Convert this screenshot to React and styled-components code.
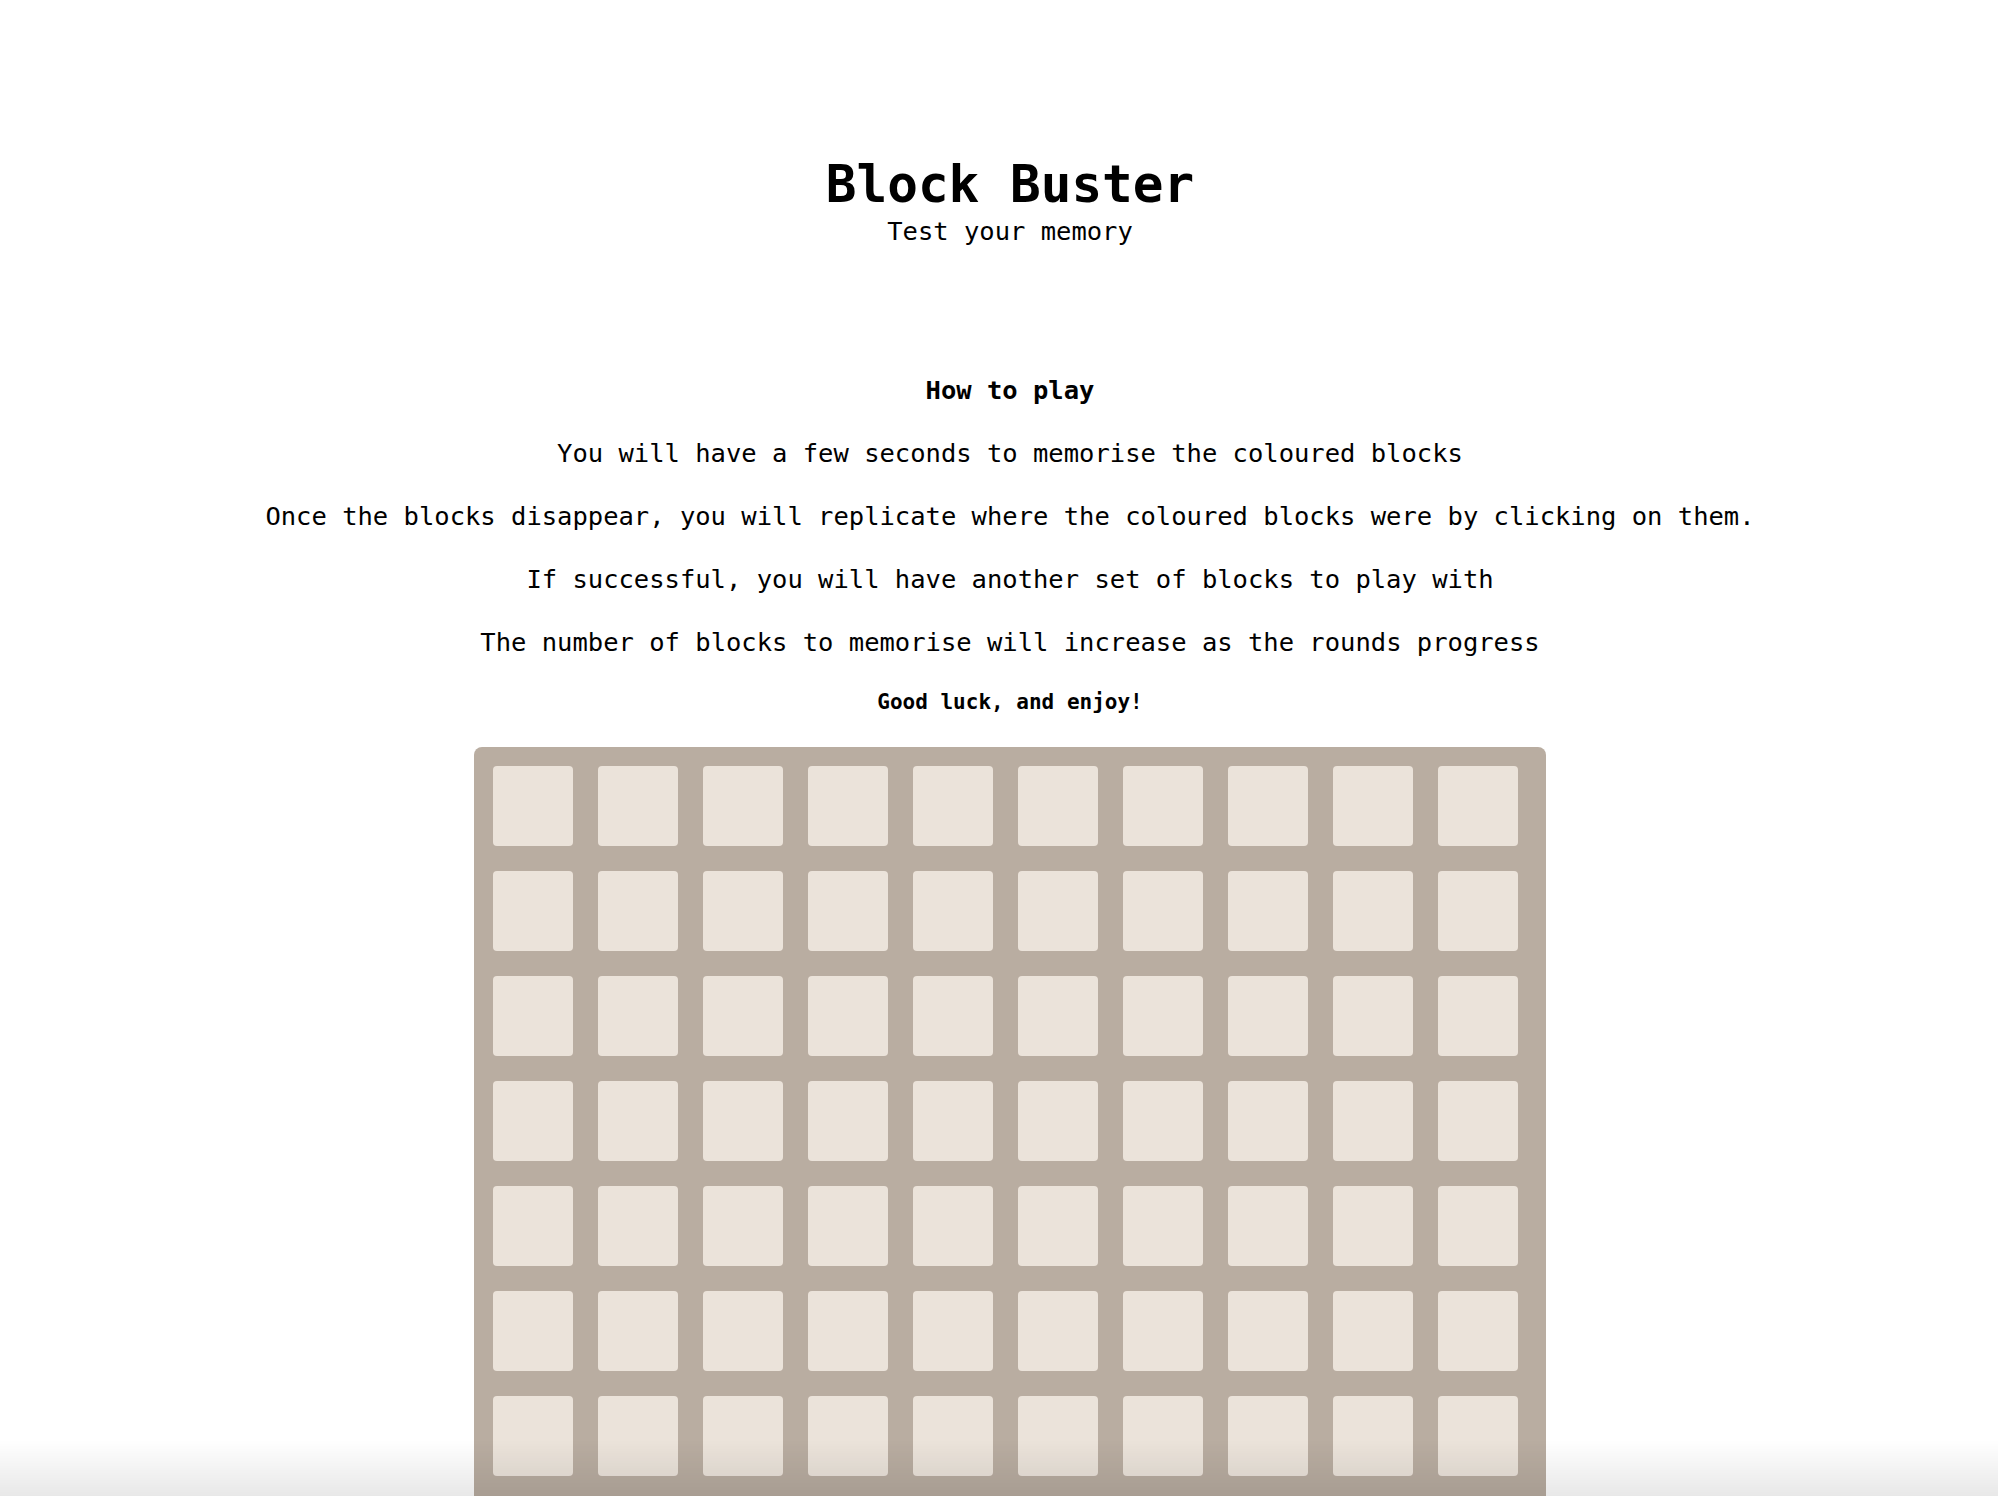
import React from "react";
import styled, { createGlobalStyle } from "styled-components";

const GlobalStyle = createGlobalStyle`
  body {
    margin: 0;
    background: #ffffff;
    font-family: "DejaVu Sans Mono", "Liberation Mono", monospace;
    color: #000;
  }
`;

const Page = styled.div`
  display: flex;
  flex-direction: column;
  align-items: center;
  padding: 155px 0 0 22px;
`;

const Header = styled.header`
  display: flex;
  flex-direction: column;
  align-items: center;
  gap: 1px;
`;

const Title = styled.h1`
  margin: 0;
  font-size: 51px;
  line-height: 60px;
  font-weight: bold;
`;

const Subtitle = styled.p`
  margin: 0;
  font-size: 25.5px;
  line-height: 30px;
`;

const Rules = styled.section`
  display: flex;
  flex-direction: column;
  align-items: center;
  gap: 33px;
  margin-top: 129px;
  text-align: center;
`;

const Line = styled.p`
  margin: 0;
  font-size: 25.5px;
  line-height: 30px;
  font-weight: ${(p) => (p.$bold ? "bold" : "normal")};
  white-space: nowrap;
`;

const Closing = styled.p`
  margin: 0;
  font-size: 21px;
  line-height: 24px;
  font-weight: bold;
`;

const Board = styled.div`
  margin-top: 33px;
  width: 1072px;
  box-sizing: border-box;
  padding: 19px;
  background: #b9ada1;
  border-radius: 8px;
  display: grid;
  grid-template-columns: repeat(10, 80px);
  grid-auto-rows: 80px;
  gap: 25px;
  margin-bottom: 40px;
`;

const Cell = styled.div`
  background: #ebe3da;
  border-radius: 4px;
`;

const BottomFade = styled.div`
  position: fixed;
  left: 0;
  right: 0;
  bottom: 0;
  height: 56px;
  pointer-events: none;
  background: linear-gradient(to bottom, rgba(0, 0, 0, 0), rgba(0, 0, 0, 0.09));
`;

const rules = [
  "You will have a few seconds to memorise the coloured blocks",
  "Once the blocks disappear, you will replicate where the coloured blocks were by clicking on them.",
  "If successful, you will have another set of blocks to play with",
  "The number of blocks to memorise will increase as the rounds progress",
];

const cells = Array.from({ length: 100 }, (_, i) => i);

export default function App() {
  return (
    <>
      <GlobalStyle />
      <Page>
        <Header>
          <Title>Block Buster</Title>
          <Subtitle>Test your memory</Subtitle>
        </Header>
        <Rules>
          <Line $bold>How to play</Line>
          {rules.map((r) => (
            <Line key={r}>{r}</Line>
          ))}
          <Closing>Good luck, and enjoy!</Closing>
        </Rules>
        <Board>
          {cells.map((c) => (
            <Cell key={c} />
          ))}
        </Board>
      </Page>
      <BottomFade />
    </>
  );
}
